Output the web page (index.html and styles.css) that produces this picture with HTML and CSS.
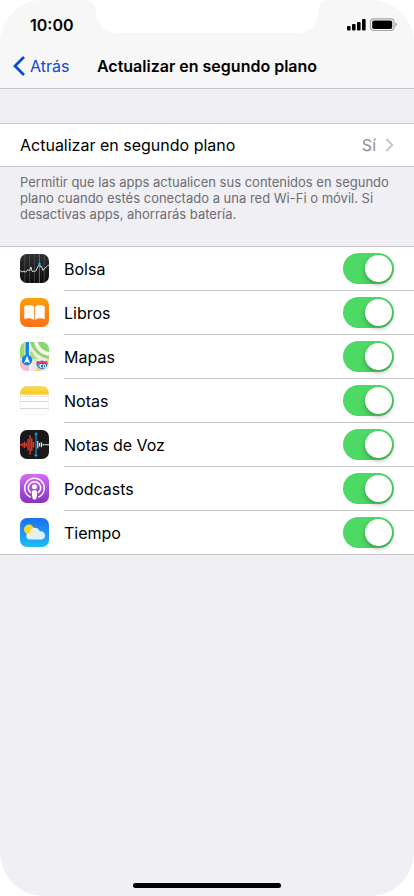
FILE: index.html
```html
<!DOCTYPE html>
<html lang="es">
<head>
<meta charset="utf-8">
<meta name="viewport" content="width=device-width, initial-scale=1">
<title>Actualizar en segundo plano</title>
<link rel="stylesheet" href="styles.css">
</head>
<body>
<div class="phone">
  <svg class="notch" viewBox="0 0 240 34" aria-hidden="true"><path d="M0 0C5 1 9 5 9 12C9 25 18 33 31 33H209C222 33 231 25 231 12C231 5 235 1 240 0Z" fill="#fff"/></svg>
  <header class="top">
    <div class="status">
      <span class="time">10:00</span>
      <svg class="indicators" width="52" height="14" viewBox="0 0 52 14" aria-hidden="true">
        <rect x="1" y="8" width="3.6" height="4.4" rx="1"/>
        <rect x="6" y="6" width="3.6" height="6.4" rx="1"/>
        <rect x="11" y="4" width="3.6" height="8.4" rx="1"/>
        <rect x="16" y="1" width="3.6" height="11.4" rx="1"/>
        <rect x="24.5" y=".9" width="23.5" height="11.6" rx="3.4" fill="#fff" stroke="#a4a4a4" stroke-width="1.2"/>
        <rect x="26.2" y="2.4" width="20" height="8.6" rx="1.8"/>
        <path d="M49.4 4.6C51.4 5.3 51.4 8.1 49.4 8.8Z" fill="#a4a4a4"/>
      </svg>
    </div>
    <nav class="nav">
      <a class="back" href="#"><svg width="14" height="22" viewBox="0 0 14 22" aria-hidden="true"><path d="M12 2L3 11L12 20" fill="none" stroke="#0a49d6" stroke-width="2.8"/></svg>Atrás</a>
      <h1 class="title">Actualizar en segundo plano</h1>
    </nav>
  </header>
  <main class="content">
    <a class="row setting" href="#">
      <span class="label">Actualizar en segundo plano</span>
      <span class="value">Sí</span>
      <svg width="9" height="14" viewBox="0 0 9 14" aria-hidden="true"><path d="M1.3 1L7.3 7L1.3 13" fill="none" stroke="#c5c5ca" stroke-width="1.9"/></svg>
    </a>
    <p class="note">Permitir que las apps actualicen sus contenidos en segundo plano cuando estés conectado a una red Wi-Fi o móvil. Si desactivas apps, ahorrarás batería.</p>
    <ul class="apps">
      <li class="app">
        <svg class="icon" viewBox="0 0 29 29" aria-hidden="true">
          <defs><linearGradient id="stocks" x2="0" y2="1"><stop stop-color="#303032"/><stop offset="1" stop-color="#0c0c0d"/></linearGradient></defs>
          <rect width="29" height="29" fill="url(#stocks)"/>
          <path d="M4.8 0V29M9.6 0V29M14.4 0V29M24.2 0V29" stroke="#555" stroke-width=".7"/>
          <path d="M19.4 0V29" stroke="#1686bd" stroke-width="1"/>
          <path d="M0 16.5L2 18L4 17L5.5 18.3L8 15.5L9.5 17L11 13L12 17.2L13.4 17.5L16 16.7L17.7 13L19.4 10.5L20.5 13L21.5 12.5L23 16.5L25 14L26.5 12.8L28 11.3H29" fill="none" stroke="#f1f1f1" stroke-width=".9"/>
          <circle cx="19.4" cy="10" r="1.5" fill="#22a3e2"/>
        </svg>
        <label for="bolsa">Bolsa</label><input id="bolsa" class="switch" type="checkbox" role="switch" checked>
      </li>
      <li class="app">
        <svg class="icon" viewBox="0 0 29 29" aria-hidden="true">
          <defs><linearGradient id="books" x2="0" y2="1"><stop stop-color="#ff9e0a"/><stop offset="1" stop-color="#fb6f18"/></linearGradient></defs>
          <rect width="29" height="29" fill="url(#books)"/>
          <path d="M14.1 8.9C12 6.5 7 6.4 4.3 8.5V21.2C7.4 19.6 11.5 19.8 14.1 22ZM14.9 8.9C17 6.5 22 6.4 24.7 8.5V21.2C21.6 19.6 17.5 19.8 14.9 22Z" fill="#fff"/>
        </svg>
        <label for="libros">Libros</label><input id="libros" class="switch" type="checkbox" role="switch" checked>
      </li>
      <li class="app">
        <svg class="icon" viewBox="0 0 29 29" aria-hidden="true">
          <rect width="29" height="29" fill="#eeeae2"/>
          <path d="M0 0H5V14L0 17Z" fill="#9bdb72"/>
          <path d="M0 19H10V29H0Z" fill="#f6bdc7"/>
          <path d="M10 0H29V17C21 16 12 9 10 0Z" fill="#8bd66b"/>
          <path d="M16 0C17 6 22 11 29 12" fill="none" stroke="#f5f3ee" stroke-width="4"/>
          <path d="M10 10C14 19 22 24 29 28" fill="none" stroke="#a8dc82" stroke-width="4"/>
          <path d="M13 17L29 18V29H14Z" fill="#e7e4dc"/>
          <path d="M10 29V14" stroke="#fff" stroke-width="1.2"/>
          <path d="M15 29L28 17L29 21L20 29Z" fill="#f6d44c"/>
          <path d="M7.2 0V17" stroke="#fff" stroke-width="5.2"/>
          <path d="M7.2 0V17" stroke="#1686e8" stroke-width="3.6"/>
          <circle cx="7" cy="18" r="5.2" fill="#147de1"/>
          <path d="M7 13.7L10 21.2L7 19.8L4 21.2Z" fill="#fff"/>
          <path d="M17 18.5L19 19.2L22 18L25 19.2L27 18.5L28 21C28 25 25 27 22 28C19 27 16 25 16 21Z" fill="#2d72bd" stroke="#fff" stroke-width=".7"/>
          <path d="M16.7 20.3H27.3" stroke="#df4c54" stroke-width="1.6"/>
          <path d="M18 23H21L18.8 25M22.5 22.5H20.5V25.7H22.5M23.5 22.5H25.5V25.7H23.5Z" fill="none" stroke="#fff" stroke-width=".8"/>
        </svg>
        <label for="mapas">Mapas</label><input id="mapas" class="switch" type="checkbox" role="switch" checked>
      </li>
      <li class="app">
        <svg class="icon" viewBox="0 0 29 29" aria-hidden="true">
          <defs><linearGradient id="notes" x2="0" y2="1"><stop stop-color="#fcdc48"/><stop offset="1" stop-color="#f8c823"/></linearGradient></defs>
          <rect width="29" height="29" fill="#fff"/>
          <rect width="29" height="8.6" fill="url(#notes)"/>
          <path d="M0 10.3H29" stroke="#b7b5ae" stroke-width=".9" stroke-dasharray=".8 1"/>
          <path d="M0 15.5H29M0 22.5H29" stroke="#d0d0d0" stroke-width=".8"/>
          <rect x=".25" y=".25" width="28.5" height="28.5" rx="6.3" fill="none" stroke="#dedede" stroke-width=".5"/>
        </svg>
        <label for="notas">Notas</label><input id="notas" class="switch" type="checkbox" role="switch" checked>
      </li>
      <li class="app">
        <svg class="icon" viewBox="0 0 29 29" aria-hidden="true">
          <rect width="29" height="29" fill="#19191a"/>
          <path d="M0 14.7H2M2.7 13V16.4M4.5 11.5V18M6.3 13V16.5M8.1 9V20.5M10 5V24.5M11.8 8V21M13.5 12V17.5" stroke="#df392f" stroke-width="1.4"/>
          <path d="M16 4V25.5" stroke="#1693d3" stroke-width="1.2"/>
          <circle cx="16" cy="4" r="1.4" fill="#1693d3"/><circle cx="16" cy="25.3" r="1.4" fill="#1693d3"/>
          <path d="M17.8 11V18.5M19.6 13V16.5M21.4 12.2V17.3M23.2 13.8V15.7M24.4 14.7H29" stroke="#f5f5f5" stroke-width="1.1"/>
        </svg>
        <label for="voz">Notas de Voz</label><input id="voz" class="switch" type="checkbox" role="switch" checked>
      </li>
      <li class="app">
        <svg class="icon" viewBox="0 0 29 29" aria-hidden="true">
          <defs><linearGradient id="podcasts" x2="0" y2="1"><stop stop-color="#d66bf4"/><stop offset="1" stop-color="#8731bf"/></linearGradient></defs>
          <rect width="29" height="29" fill="url(#podcasts)"/>
          <path d="M10.7 23.2A9.8 9.8 0 1 1 18.3 23.2M10.8 18.8A6.2 6.2 0 1 1 18.2 18.8" fill="none" stroke="#fff" stroke-width="1.5"/>
          <circle cx="14.5" cy="12.8" r="2.5" fill="#fff"/>
          <path d="M11.8 18.2C11.8 15.7 17.2 15.7 17.2 18.2C17.2 20 16.7 23 16.3 24.4C16 25.7 13 25.7 12.7 24.4C12.3 23 11.8 20 11.8 18.2Z" fill="#fff"/>
        </svg>
        <label for="podcast">Podcasts</label><input id="podcast" class="switch" type="checkbox" role="switch" checked>
      </li>
      <li class="app">
        <svg class="icon" viewBox="0 0 29 29" aria-hidden="true">
          <defs><linearGradient id="weather" x2="0" y2="1"><stop stop-color="#1e6fed"/><stop offset="1" stop-color="#1dbcf5"/></linearGradient></defs>
          <rect width="29" height="29" fill="url(#weather)"/>
          <circle cx="9" cy="11.5" r="5" fill="#ffd527"/>
          <path d="M9.8 21.5C5.3 21.5 5 15.3 9.3 14.7C10.2 9 18 7.7 19.8 13.2C26.2 12.3 27 21.5 20.8 21.5Z" fill="#edf7ff" fill-opacity=".94"/>
          <path d="M9.3 14.7C9.8 12.3 11.3 11 13.4 10.3C14.2 12.5 13.8 15 11.8 16.4C10 17.5 7.8 16.6 7.2 15.8Z" fill="#ffedaa"/>
        </svg>
        <label for="tiempo">Tiempo</label><input id="tiempo" class="switch" type="checkbox" role="switch" checked>
      </li>
    </ul>
  </main>
  <div class="home"></div>
</div>
</body>
</html>
```

FILE: styles.css
```css
* { box-sizing: border-box; }
body {
  margin: 0;
  background: #fff;
  color: #000;
  font: 16px/20px Inter, "Liberation Sans", sans-serif;
}
a { color: inherit; text-decoration: none; }
.phone {
  position: relative;
  display: flex;
  flex-direction: column;
  min-height: 100vh;
  overflow: hidden;
  border-radius: 44px;
  background: #efeff4;
}
.notch {
  position: absolute;
  top: 0;
  left: 50%;
  width: 240px;
  height: 34px;
  transform: translateX(-50%);
}
.top {
  background: #f7f7f7;
  border-bottom: 1px solid #c8c7cc;
}
.status {
  display: flex;
  align-items: center;
  justify-content: space-between;
  height: 44px;
  padding: 6px 16px 0 30px;
}
.time { font-weight: 600; }
.nav {
  display: grid;
  grid-template-columns: 1fr auto 1fr;
  align-items: center;
  height: 44px;
  padding: 0 12px;
}
.back {
  display: flex;
  align-items: center;
  gap: 4px;
  color: #0a49d6;
}
.title {
  margin: 0;
  font-size: 16px;
  font-weight: 600;
}
.content { flex: 1; padding-top: 34px; }
.row {
  display: flex;
  align-items: center;
  height: 44px;
  padding: 0 20px;
  background: #fff;
  border: solid #c8c7cc;
  border-width: 1px 0;
}
.label { flex: 1; }
.value { margin-right: 9px; color: #8e8e93; }
.note {
  margin: 0;
  padding: 7px 24px 24px 20px;
  color: #6d6d72;
  font-size: 13px;
  line-height: 16px;
}
.apps {
  margin: 0;
  padding: 0;
  list-style: none;
  background: #fff;
  border: solid #c8c7cc;
  border-width: 1px 0;
}
.app {
  display: grid;
  grid-template-columns: 29px 1fr 51px 20px;
  grid-template-rows: 43px 1px;
  align-items: center;
  padding-left: 20px;
}
.app:last-child { grid-template-rows: 43px; }
.app label { padding-left: 15px; }
.app:not(:last-child)::after {
  content: "";
  grid-row: 2;
  grid-column: 2 / 5;
  height: 1px;
  margin-left: 15px;
  background: #c8c7cc;
}
.icon { width: 29px; height: 29px; border-radius: 7px; }
.switch {
  appearance: none;
  width: 51px;
  height: 31px;
  margin: 0;
  padding: 2px;
  border-radius: 16px;
  background: #e5e5ea;
}
.switch::before {
  content: "";
  display: block;
  width: 27px;
  height: 27px;
  border-radius: 50%;
  background: #fff;
  box-shadow: 0 3px 5px rgba(0, 0, 0, .25);
}
.switch:checked { background: #4cd964; }
.switch:checked::before { margin-left: auto; }
.home {
  width: 148px;
  height: 5px;
  margin: 0 auto 8px;
  border-radius: 3px;
  background: #000;
}
```
